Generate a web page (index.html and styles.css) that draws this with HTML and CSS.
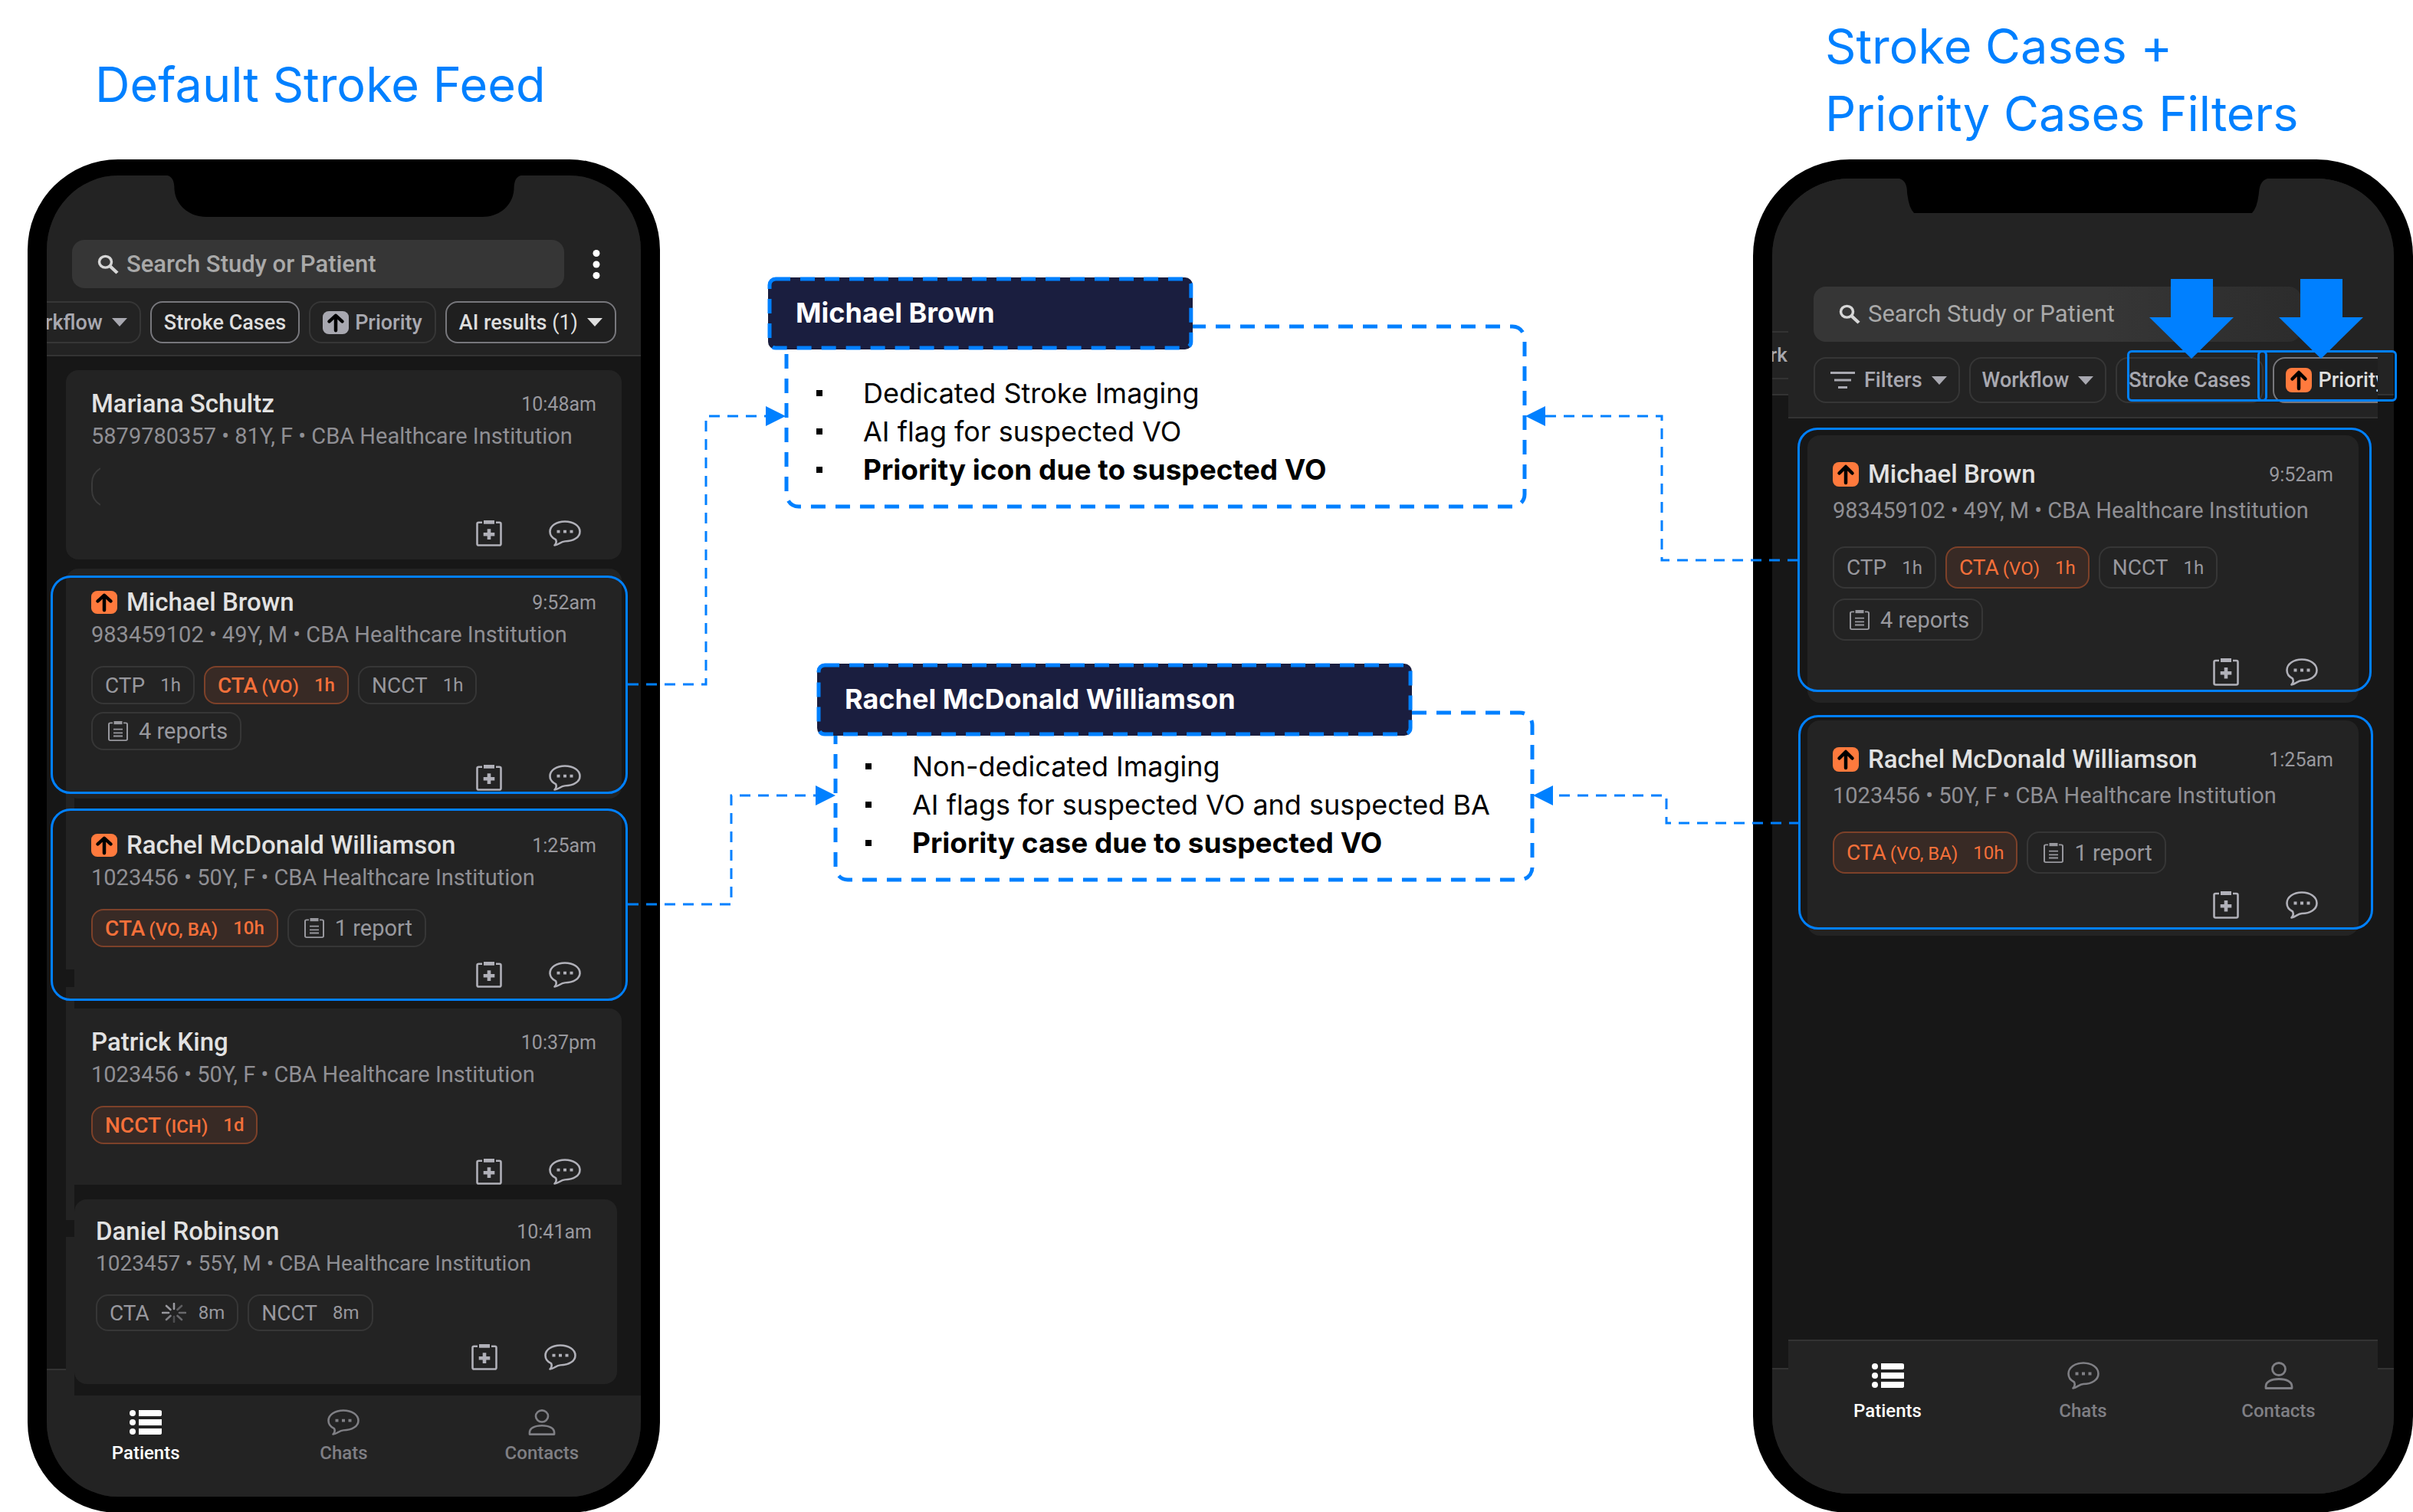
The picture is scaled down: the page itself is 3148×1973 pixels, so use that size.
FILE: index.html
```html
<!DOCTYPE html>
<html lang="en">
<head>
<meta charset="utf-8">
<meta name="viewport" content="width=device-width, initial-scale=1">
<title>Stroke feed and filters</title>
<link rel="stylesheet" href="styles.css">
</head>
<body>
<svg class="sprite" aria-hidden="true">
  <symbol id="i-search" viewBox="0 0 28 28" preserveAspectRatio="none"><circle cx="10.5" cy="10.5" r="8" fill="none" stroke="currentColor" stroke-width="3.5"/><path d="M16.5 16.5 26 26" stroke="currentColor" stroke-width="4.5"/></symbol>
  <symbol id="i-more" viewBox="0 0 10 40"><circle cx="5" cy="5.5" r="4.5" fill="currentColor"/><circle cx="5" cy="20" r="4.5" fill="currentColor"/><circle cx="5" cy="34.5" r="4.5" fill="currentColor"/></symbol>
  <symbol id="i-caret" viewBox="0 0 20 11"><path d="M0 0H20L10 11Z" fill="currentColor"/></symbol>
  <symbol id="i-up" viewBox="0 0 34 32" preserveAspectRatio="none"><rect width="34" height="32" rx="8" fill="currentColor"/><path d="M17 27V7M8.5 14.5 17 6 25.5 14.5" fill="none" stroke="#000" stroke-width="4.5" stroke-linecap="round" stroke-linejoin="round"/></symbol>
  <symbol id="i-clip" viewBox="0 0 34 36" preserveAspectRatio="none"><path d="M8 3H3.5Q1.5 3 1.5 5V32.5Q1.5 34.5 3.5 34.5H30.5Q32.5 34.5 32.5 32.5V5Q32.5 3 30.5 3H26" fill="none" stroke="currentColor" stroke-width="2.6"/><path d="M10 0H24V5H10ZM14.7 12h4.6v5h5v4.6h-5v5h-4.6v-5h-5v-4.6h5Z" fill="currentColor"/></symbol>
  <symbol id="i-chat" viewBox="0 0 42 36" preserveAspectRatio="none"><path d="M7.5 34.5C10 32 10.5 30 9 26.5C4 24 1.5 20 1.5 15.5C1.5 7.5 10 1.5 21 1.5S40.5 7.5 40.5 15.5S32 29 21 29C15 29.5 13.5 33.5 7.5 34.5Z" fill="none" stroke="currentColor" stroke-width="2.6" stroke-linejoin="round"/><path d="M10.5 13.5h4v4h-4ZM19 13.5h4v4h-4ZM27.5 13.5h4v4h-4Z" fill="currentColor"/></symbol>
  <symbol id="i-report" viewBox="0 0 26 28" preserveAspectRatio="none"><path d="M6 2.5H3Q1 2.5 1 4.5V25Q1 27 3 27H23Q25 27 25 25V4.5Q25 2.5 23 2.5H20M7 11.5H19M7 16.5H19M7 21H19" fill="none" stroke="currentColor" stroke-width="2"/><path d="M7.5 0H18.5V4.5H7.5Z" fill="currentColor"/></symbol>
  <symbol id="i-list" viewBox="0 0 42 32"><path d="M12 0H39Q42 0 42 2V6Q42 8 39 8H12ZM12 12H42V20H12ZM12 24H42V30Q42 32 39 32H12Z" fill="currentColor"/><circle cx="4" cy="4" r="4" fill="currentColor"/><circle cx="4" cy="16" r="4" fill="currentColor"/><circle cx="4" cy="28" r="4" fill="currentColor"/></symbol>
  <symbol id="i-person" viewBox="0 0 38 36"><ellipse cx="19" cy="9.5" rx="8.5" ry="8" fill="none" stroke="currentColor" stroke-width="2.8"/><path d="M2 34.5V32C2 26 9 22.5 19 22.5S36 26 36 32V34.5Z" fill="none" stroke="currentColor" stroke-width="2.8" stroke-linejoin="round"/></symbol>
  <symbol id="i-filter" viewBox="0 0 32 22"><path d="M0 1.5H32M5 11H27M10 20.5H22" stroke="currentColor" stroke-width="3"/></symbol>
  <symbol id="i-spin" viewBox="0 0 32 26"><g stroke="currentColor" stroke-width="2.6" stroke-linecap="round"><path d="M16 1V8"/><path d="M26 4 20.5 9" opacity=".5"/><path d="M31 13H23" opacity=".6"/><path d="M26 22 20.5 17" opacity=".6"/><path d="M16 25V18" opacity=".35"/><path d="M6 22 11.5 17" opacity=".8"/><path d="M1 13H9"/><path d="M6 4 11.5 9"/></g></symbol>
</svg>

<main class="board">
  <section class="side side--left">
    <header class="side__head"><h1 class="title">Default Stroke Feed</h1></header>
    <div class="phone phone--left">
      <svg class="notch" width="461" height="54" viewBox="0 0 461 54" aria-hidden="true"><path d="M0 0Q9 2 9 18C10 38 28 54 50 54H411C434 54 451 38 452 18Q452 2 461 0Z"/></svg>
      <div class="top">
        <div class="top__panel">
          <div class="searchrow">
            <label class="search"><svg class="search__icon"><use href="#i-search"/></svg><input class="search__input" type="search" aria-label="Search" placeholder="Search Study or Patient"></label>
            <button class="more" type="button" aria-label="More"><svg width="10" height="40"><use href="#i-more"/></svg></button>
          </div>
          <div class="filters">
            <button class="filter" type="button">Workflow<svg class="caret"><use href="#i-caret"/></svg></button>
            <button class="filter filter--on" type="button">Stroke Cases</button>
            <button class="filter filter--icon" type="button"><svg class="up up--grey"><use href="#i-up"/></svg>Priority</button>
            <button class="filter filter--on" type="button"><span>AI results <span class="light">(1)</span></span><svg class="caret"><use href="#i-caret"/></svg></button>
          </div>
        </div>
      </div>
      <div class="feed">
        <article class="card card--a">
          <div class="card__head"><h2 class="name">Mariana Schultz</h2><time class="time">10:48am</time></div>
          <p class="info">5879780357 • 81Y, F • CBA Healthcare Institution</p>
          <div class="tags"><svg width="12" height="50" viewBox="0 0 12 50" aria-hidden="true"><path d="M12 1Q1 8 1 20V30Q1 42 12 49" fill="none" stroke="#3a3a3a" stroke-width="2"/></svg></div>
          <div class="acts"><button class="act act--clip" type="button" aria-label="Add report"><svg><use href="#i-clip"/></svg></button><button class="act" type="button" aria-label="Chat"><svg><use href="#i-chat"/></svg></button></div>
        </article>
        <article class="card card--b">
          <div class="card__head"><svg class="up"><use href="#i-up"/></svg><h2 class="name">Michael Brown</h2><time class="time">9:52am</time></div>
          <p class="info">983459102 • 49Y, M • CBA Healthcare Institution</p>
          <div class="tags"><span class="tag">CTP<small>1h</small></span><span class="tag tag--hot"><span>CTA<small class="find">(VO)</small></span><small>1h</small></span><span class="tag">NCCT<small>1h</small></span><span class="tag tag--report"><svg class="report"><use href="#i-report"/></svg>4 reports</span></div>
          <div class="acts"><button class="act act--clip" type="button" aria-label="Add report"><svg><use href="#i-clip"/></svg></button><button class="act" type="button" aria-label="Chat"><svg><use href="#i-chat"/></svg></button></div>
          <div class="ring"></div>
        </article>
        <article class="card card--c">
          <div class="card__head"><svg class="up"><use href="#i-up"/></svg><h2 class="name">Rachel McDonald Williamson</h2><time class="time">1:25am</time></div>
          <p class="info">1023456 • 50Y, F • CBA Healthcare Institution</p>
          <div class="tags"><span class="tag tag--hot"><span>CTA<small class="find">(VO, BA)</small></span><small>10h</small></span><span class="tag tag--report"><svg class="report"><use href="#i-report"/></svg>1 report</span></div>
          <div class="acts"><button class="act act--clip" type="button" aria-label="Add report"><svg><use href="#i-clip"/></svg></button><button class="act" type="button" aria-label="Chat"><svg><use href="#i-chat"/></svg></button></div>
          <div class="ring"></div>
        </article>
        <article class="card card--d">
          <div class="card__head"><h2 class="name">Patrick King</h2><time class="time">10:37pm</time></div>
          <p class="info">1023456 • 50Y, F • CBA Healthcare Institution</p>
          <div class="tags"><span class="tag tag--hot"><span>NCCT<small class="find">(ICH)</small></span><small>1d</small></span></div>
          <div class="acts"><button class="act act--clip" type="button" aria-label="Add report"><svg><use href="#i-clip"/></svg></button><button class="act" type="button" aria-label="Chat"><svg><use href="#i-chat"/></svg></button></div>
        </article>
        <article class="card card--e">
          <div class="card__head"><h2 class="name">Daniel Robinson</h2><time class="time">10:41am</time></div>
          <p class="info">1023457 • 55Y, M • CBA Healthcare Institution</p>
          <div class="tags"><span class="tag tag--busy">CTA<svg class="spin"><use href="#i-spin"/></svg><small>8m</small></span><span class="tag">NCCT<small>8m</small></span></div>
          <div class="acts"><button class="act act--clip" type="button" aria-label="Add report"><svg><use href="#i-clip"/></svg></button><button class="act" type="button" aria-label="Chat"><svg><use href="#i-chat"/></svg></button></div>
        </article>
      </div>
      <nav class="nav"><div class="nav__panel">
        <a class="tab tab--on" href="#patients"><svg width="42" height="32"><use href="#i-list"/></svg>Patients</a>
        <a class="tab" href="#chats"><svg width="42" height="34"><use href="#i-chat"/></svg>Chats</a>
        <a class="tab" href="#contacts"><svg width="38" height="34"><use href="#i-person"/></svg>Contacts</a>
      </div></nav>
    </div>
  </section>

  <section class="notes">
    <article class="note note--one">
      <h2 class="note__name"><svg class="dash"><rect rx="8"/></svg>Michael Brown</h2>
      <div class="note__body"><svg class="dash"><rect rx="16"/></svg>
        <ul class="points"><li>Dedicated Stroke Imaging</li><li>AI flag for suspected VO</li><li><strong>Priority icon due to suspected VO</strong></li></ul>
      </div>
    </article>
    <article class="note note--two">
      <h2 class="note__name"><svg class="dash"><rect rx="8"/></svg>Rachel McDonald Williamson</h2>
      <div class="note__body"><svg class="dash"><rect rx="16"/></svg>
        <ul class="points"><li>Non-dedicated Imaging</li><li>AI flags for suspected VO and suspected BA</li><li><strong>Priority case due to suspected VO</strong></li></ul>
      </div>
    </article>
  </section>

  <section class="side side--right">
    <header class="side__head"><h1 class="title">Stroke Cases +<br>Priority Cases Filters</h1></header>
    <div class="phone phone--right">
      <svg class="notch" width="480" height="45" viewBox="0 0 480 45" aria-hidden="true"><path d="M0 0Q10 3 10 18Q12 38 19 45H460Q467 38 469 18Q470 3 480 0Z"/></svg>
      <div class="top">
        <span class="sliver">rk</span>
        <div class="top__panel">
          <div class="searchrow">
            <label class="search"><svg class="search__icon"><use href="#i-search"/></svg><input class="search__input" type="search" aria-label="Search" placeholder="Search Study or Patient"></label>
          </div>
          <div class="filters">
            <button class="filter filter--menu" type="button"><svg class="lines"><use href="#i-filter"/></svg>Filters<svg class="caret"><use href="#i-caret"/></svg></button>
            <button class="filter" type="button">Workflow<svg class="caret"><use href="#i-caret"/></svg></button>
            <button class="filter" type="button">Stroke Cases</button>
            <button class="filter filter--on filter--icon" type="button"><svg class="up"><use href="#i-up"/></svg>Priority</button>
          </div>
        </div>
      </div>
      <div class="feed">
        <article class="card">
          <div class="card__head"><svg class="up"><use href="#i-up"/></svg><h2 class="name">Michael Brown</h2><time class="time">9:52am</time></div>
          <p class="info">983459102 • 49Y, M • CBA Healthcare Institution</p>
          <div class="tags"><span class="tag">CTP<small>1h</small></span><span class="tag tag--hot"><span>CTA<small class="find">(VO)</small></span><small>1h</small></span><span class="tag">NCCT<small>1h</small></span><span class="tag tag--report"><svg class="report"><use href="#i-report"/></svg>4 reports</span></div>
          <div class="acts"><button class="act act--clip" type="button" aria-label="Add report"><svg><use href="#i-clip"/></svg></button><button class="act" type="button" aria-label="Chat"><svg><use href="#i-chat"/></svg></button></div>
          <div class="ring ring--tall"></div>
        </article>
        <article class="card">
          <div class="card__head"><svg class="up"><use href="#i-up"/></svg><h2 class="name">Rachel McDonald Williamson</h2><time class="time">1:25am</time></div>
          <p class="info">1023456 • 50Y, F • CBA Healthcare Institution</p>
          <div class="tags"><span class="tag tag--hot"><span>CTA<small class="find">(VO, BA)</small></span><small>10h</small></span><span class="tag tag--report"><svg class="report"><use href="#i-report"/></svg>1 report</span></div>
          <div class="acts"><button class="act act--clip" type="button" aria-label="Add report"><svg><use href="#i-clip"/></svg></button><button class="act" type="button" aria-label="Chat"><svg><use href="#i-chat"/></svg></button></div>
          <div class="ring"></div>
        </article>
      </div>
      <nav class="nav"><div class="nav__panel">
        <a class="tab tab--on" href="#patients"><svg width="42" height="32"><use href="#i-list"/></svg>Patients</a>
        <a class="tab" href="#chats"><svg width="42" height="36"><use href="#i-chat"/></svg>Chats</a>
        <a class="tab" href="#contacts"><svg width="38" height="36"><use href="#i-person"/></svg>Contacts</a>
      </div></nav>
    </div>
    <div class="marks" aria-hidden="true">
      <div class="mark"><svg class="arrow" width="110" height="104" viewBox="0 0 110 104"><path d="M28 0H83V50H110L55 104 0 50H28Z"/></svg></div>
      <div class="mark"><svg class="arrow" width="110" height="104" viewBox="0 0 110 104"><path d="M28 0H83V50H110L55 104 0 50H28Z"/></svg></div>
    </div>
  </section>

  <svg class="wires" viewBox="0 0 3148 1973" preserveAspectRatio="none" aria-hidden="true">
    <g class="wire"><path d="M819 893H921V543H1002"/><path d="M819 1180H954V1038H1066"/><path d="M2346 731H2168V543H2012"/><path d="M2348 1074H2174V1038H2022"/></g>
    <g class="tip"><path d="M999 530 1025 543 999 556Z"/><path d="M1064 1025 1090 1038 1064 1051Z"/><path d="M2016 530 1990 543 2016 556Z"/><path d="M2026 1025 2000 1038 2026 1051Z"/></g>
  </svg>
</main>
</body>
</html>
```

FILE: styles.css
```css
* { box-sizing: border-box; }

body {
  margin: 0;
  background: #fff;
  font-family: Roboto, "Liberation Sans", sans-serif;
}

h1, h2, p, ul { margin: 0; padding: 0; font-weight: 400; }
button { font: inherit; color: inherit; background: none; border: 0; padding: 0; }
svg { display: block; flex: none; }
.sprite { position: absolute; width: 0; height: 0; }

.board {
  position: relative;
  display: grid;
  grid-template-columns: 36fr minmax(0, 825fr) 141fr minmax(0, 999fr) 286fr minmax(0, 861fr);
  min-height: 100vh;
}
.side { position: relative; display: flex; flex-direction: column; }
.side--left { grid-column: 2; }
.notes { grid-column: 4; }
.side--right { grid-column: 6; }

.side__head { height: 208px; display: flex; align-items: center; }
.side--left .side__head { padding: 12px 0 0 88px; }
.side--right .side__head { padding-left: 94px; }
.title {
  font-family: Inter, "Liberation Sans", sans-serif;
  font-size: 63px;
  line-height: 88px;
  color: #0080ff;
  white-space: nowrap;
}

/* Phone shell */
.phone {
  position: relative;
  flex: 1;
  display: flex;
  flex-direction: column;
  overflow: hidden;
  background: #171717;
  color: #a8a8ae;
}
.phone--left { border: solid #000; border-width: 21px 25px; border-radius: 118px; }
.phone--right { border: 25px solid #000; border-radius: 126px; }
.notch { position: absolute; top: 0; left: 50%; transform: translateX(-50%); z-index: 1; }

.top { position: relative; }
.top__panel { background: #232323; border-bottom: 2px solid #333; overflow: hidden; }
.phone--left .top__panel { padding: 84px 0 15px 33px; }
.phone--right .top { padding: 0 21px; background: linear-gradient(#232323 0 281px, #333 281px 283px, transparent 283px); }
.phone--right .top__panel { padding: 141px 0 18px 33px; }

.searchrow { display: flex; align-items: center; gap: 26px; padding-right: 42px; }
.phone--right .searchrow { padding-right: 100px; }
.search {
  flex: 1;
  display: flex;
  align-items: center;
  gap: 10px;
  height: 63px;
  padding-left: 33px;
  border-radius: 16px;
  background: #363636;
  color: #d6d6d6;
}
.phone--right .search { height: 72px; background: linear-gradient(90deg, #363636 60%, #2c2c2c); }
.search__icon { width: 28px; height: 26px; }
.search__input {
  flex: 1;
  min-width: 0;
  padding: 0;
  border: 0;
  outline: 0;
  background: none;
  color: #eee;
  font: 400 31px/40px Roboto, sans-serif;
}
.search__input::placeholder { color: #a9a9a9; opacity: 1; }
.phone--left .search__input { font-weight: 500; }
.more { width: 32px; display: flex; justify-content: center; color: #fff; }

.filters { display: flex; gap: 12px; margin-top: 17px; white-space: nowrap; }
.phone--left .filters { justify-content: flex-end; padding-right: 32px; margin-left: -33px; }
.phone--right .filters { margin-top: 20px; }
.filter {
  flex: none;
  display: flex;
  align-items: center;
  gap: 12px;
  height: 55px;
  padding: 0 15px;
  border: 2px solid #363636;
  border-radius: 16px;
  font-size: 27px;
  font-weight: 500;
  color: #a8a8b0;
}
.phone--left .filter { padding: 0 16px; }
.phone--right .filter { height: 60px; }
.filter--on { border-color: #77777c; color: #dedede; background: #1f1f1f; }
.filter--menu { padding-left: 20px; }
.filter--icon { gap: 8px; }
.caret { width: 20px; height: 11px; }
.lines { width: 32px; height: 22px; }
.light { font-weight: 400; }
.up { width: 34px; height: 30px; color: #ff7a3d; }
.up--grey { color: #a8a8b0; }
.phone--right .up { height: 32px; }

.sliver {
  position: absolute;
  top: 199px;
  left: 0;
  width: 21px;
  height: 63px;
  overflow: hidden;
  border: solid #333;
  border-width: 2px 0;
  font: 500 26px/58px Roboto, sans-serif;
  text-indent: -3px;
}

/* Blue call-outs over the filter row */
.marks { position: absolute; top: 457px; left: 488px; right: 21px; height: 67px; display: grid; grid-template-columns: 1fr 1fr; }
.mark { position: relative; margin-right: -7px; border: 3px solid #0080ff; border-radius: 6px; }
.mark + .mark { margin: 0 0 0 -6px; }
.arrow { position: absolute; left: 50%; top: -96px; margin-left: -63px; fill: #0080ff; }

/* Feed */
.feed { flex: 1; }
.phone--left .feed {
  padding: 18px 25px 15px;
  background:
    linear-gradient(transparent 555px, #232323 555px 800px, transparent 800px 823px, #232323 823px 1127px, transparent 1127px 1149px, #232323 1149px) 25px 0 / 11px 100% no-repeat,
    linear-gradient(transparent 1321px, #333 1321px 1323px, #232323 1323px) 0 0 / 36px 100% no-repeat;
}
.phone--right .feed { padding: 22px 46px; }
.card { position: relative; padding: 24px 33px 17px; border-radius: 16px; background: #232323; }
.phone--right .card { padding: 31px 33px 22px; }
.phone--right .card + .card { margin-top: 23px; }
.card--a { margin-bottom: 12px; }
.phone--left .card--b { margin-bottom: 14px; padding-bottom: 10px; }
.phone--left .card--c { margin: 0 0 10px 11px; padding: 27px 33px 17px 22px; border-radius: 0 16px 16px 0; }
.phone--left .card--d { margin: 0 0 19px 11px; padding: 24px 33px 0 22px; border-radius: 0 16px 0 0; }
.phone--left .card--e { margin: 0 6px 0 11px; padding: 22px 33px 18px 28px; }

.card__head { display: flex; align-items: center; height: 40px; }
.card__head .up { margin-right: 12px; }
.name { flex: 1; font-size: 33px; font-weight: 500; line-height: 40px; color: #e2e2e2; white-space: nowrap; }
.time { font-size: 25px; color: #98989e; }
.info { margin-top: 2px; font-size: 29px; line-height: 40px; color: #8f8f94; white-space: nowrap; }
.phone--right .info { margin-top: 7px; }
.phone--left .card--e .info { font-size: 28px; }
.tags { display: flex; flex-wrap: wrap; gap: 10px 12px; margin-top: 21px; }
.phone--right .tags { margin-top: 27px; row-gap: 13px; }
.tag {
  display: flex;
  align-items: center;
  gap: 20px;
  height: 50px;
  padding: 0 16px;
  border: 2px solid #363636;
  border-radius: 16px;
  font-size: 28px;
  color: #98989e;
  white-space: nowrap;
}
.phone--right .tag { height: 55px; }
.tag small { font-size: 24px; }
.tag .find { margin-left: 5px; }
.tag--hot { border-color: #7d4129; background: #382a25; color: #f4703a; font-weight: 500; }
.phone--right .tag--hot { font-weight: 400; }
.tag--report { gap: 14px; padding-left: 20px; font-size: 29px; }
.tag--busy { gap: 16px; }
.card--e .tags { margin-top: 20px; }
.card--e .tag { height: 48px; }
.card--e .acts { margin-top: 17px; }
.report { width: 26px; height: 26px; }
.spin { width: 32px; height: 26px; }
.acts { display: flex; justify-content: flex-end; gap: 61px; margin-top: 19px; padding-right: 20px; color: #b0b0b8; }
.phone--right .acts { margin-top: 23px; }
.act svg { width: 42px; height: 34px; }
.act--clip svg { width: 34px; }
.phone--right .act svg { height: 36px; }

.ring { position: absolute; inset: 9px -8px 6px -20px; border: 3px solid #0080ff; border-radius: 26px; }
.card--c .ring { inset: -1px -8px 0 -31px; }
.phone--right .ring { inset: -7px -19px 8px -12px; }
.phone--right .ring--tall { inset: -10px -17px 14px -13px; }

/* Bottom navigation */
.nav__panel { display: grid; grid-template-columns: 1fr 1fr 1fr; background: #232323; }
.phone--left .nav__panel { height: 132px; padding-top: 17px; }
.phone--right .nav { padding: 0 21px; background: linear-gradient(transparent 37px, #333 37px 39px, #232323 39px); }
.phone--right .nav__panel { height: 201px; padding: 27px 2px 0; border-top: 2px solid #333; }
.tab {
  display: grid;
  grid-template-rows: 36px 32px;
  row-gap: 6px;
  align-content: start;
  justify-items: center;
  align-items: center;
  font-size: 24px;
  font-weight: 500;
  line-height: 32px;
  color: #7f7f84;
  text-decoration: none;
}
.phone--right .tab { row-gap: 12px; }
.tab--on { color: #fff; }

/* Notes between the phones */
.notes { font-family: Inter, "Liberation Sans", sans-serif; padding-top: 362px; }
.note--one { margin-right: 10px; }
.note--two { margin: 203px 0 0 64px; }
.note__name {
  position: relative;
  z-index: 1;
  width: 56%;
  height: 94px;
  padding-left: 36px;
  border-radius: 10px;
  background: #1a1e3f;
  color: #fff;
  font-size: 36px;
  font-weight: 700;
  line-height: 92px;
  white-space: nowrap;
}
.note--two .note__name { width: 83%; }
.note__body { position: relative; margin: -32px 0 0 22px; padding: 64px 0 25px 41px; }
.note--two .note__body { padding: 47px 0 25px 41px; }
.dash { position: absolute; inset: 0; width: 100%; height: 100%; overflow: visible; }
.dash rect {
  x: 2px;
  y: 2px;
  width: calc(100% - 4px);
  height: calc(100% - 4px);
  fill: none;
  stroke: #0080ff;
  stroke-width: 5px;
  stroke-dasharray: 19 13;
}
.points { list-style: none; font-size: 36px; line-height: 50px; color: #000; }
.points strong { font-size: 37px; }
.points li { display: flex; align-items: center; gap: 53px; white-space: nowrap; }
.points li::before { content: ""; width: 8px; height: 8px; background: #000; }

/* Connectors */
.wires { position: absolute; inset: 0; width: 100%; height: 1973px; pointer-events: none; z-index: 2; }
.wire path { fill: none; stroke: #0080ff; stroke-width: 3px; stroke-dasharray: 14 10; vector-effect: non-scaling-stroke; }
.tip { fill: #0080ff; }
```
